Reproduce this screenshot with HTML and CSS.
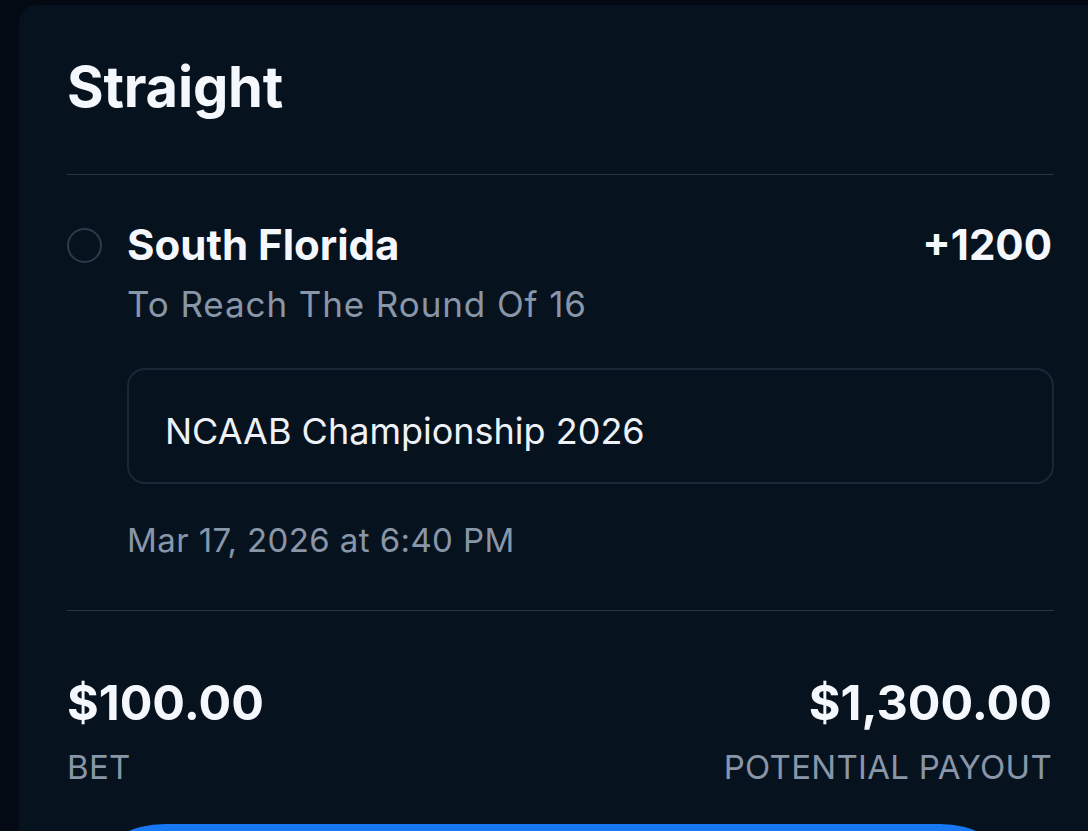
FILE: index.html
```html
<!DOCTYPE html>
<html lang="en">
<head>
  <meta charset="UTF-8">
  <meta name="viewport" content="width=device-width, initial-scale=1.0">
  <title>Bet Slip - Straight</title>
  <link rel="stylesheet" href="styles.css">
</head>
<body>
  <div class="card">
    <h1 class="title">Straight</h1>

    <div class="divider"></div>

    <div class="selection">
      <span class="radio"></span>
      <div class="selection-body">
        <div class="selection-head">
          <span class="team">South Florida</span>
          <span class="odds">+1200</span>
        </div>
        <div class="market">To Reach The Round Of 16</div>
        <div class="event">NCAAB Championship 2026</div>
        <div class="date">Mar 17, 2026 at 6:40 PM</div>
      </div>
    </div>

    <div class="divider"></div>

    <div class="totals">
      <div class="total">
        <div class="amount">$100.00</div>
        <div class="label">BET</div>
      </div>
      <div class="total right">
        <div class="amount">$1,300.00</div>
        <div class="label">POTENTIAL PAYOUT</div>
      </div>
    </div>

    <!-- button label sits below the fold -->
    <button class="place-btn" aria-label="Place Bet"></button>
  </div>
</body>
</html>
```

FILE: styles.css
```css
body {
  margin: 0;
  background-color: #030a14;
  font-family: Inter, "Noto Sans", sans-serif;
  color: #f4f7fb;
  height: 831px;
  overflow: hidden;
}
.card {
  margin: 5px -40px 0 19px;
  background-color: #07121f;
  border-radius: 18px;
  padding: 50px 74px 0 48px;
  min-height: 900px;
}
.title {
  margin: 0 0 55px;
  font-size: 56px;
  font-weight: 700;
  line-height: 64px;
  letter-spacing: -0.2px;
}
.divider {
  height: 1px;
  background-color: #2a3544;
}
.selection {
  display: flex;
  gap: 25px;
  padding-top: 37px;
  padding-bottom: 48px;
}
.radio {
  width: 35px;
  height: 35px;
  border: 2px solid #2f3a48;
  border-radius: 50%;
  box-sizing: border-box;
  margin-top: 16px;
  flex-shrink: 0;
}
.selection-body {
  flex: 1;
}
.selection-head {
  display: flex;
  justify-content: space-between;
  align-items: baseline;
  margin-right: 2px;
}
.team,
.odds {
  font-size: 42px;
  font-weight: 700;
  line-height: 66px;
}
.market {
  font-size: 35px;
  letter-spacing: 0.9px;
  color: #8896a8;
  line-height: 44px;
  margin-top: 4px;
}
.event {
  margin-top: 42px;
  border: 2px solid #1c2735;
  border-radius: 18px;
  padding: 10px 36px 0;
  height: 116px;
  box-sizing: border-box;
  display: flex;
  align-items: center;
  font-size: 36px;
  color: #eef2f7;
}
.date {
  margin-top: 34px;
  font-size: 33px;
  letter-spacing: 0.4px;
  color: #8896a8;
  line-height: 44px;
}
.totals {
  display: flex;
  justify-content: space-between;
  padding-top: 62px;
  margin-right: 2px;
}
.total.right {
  text-align: right;
}
.amount {
  font-size: 48.5px;
  font-weight: 700;
  line-height: 60px;
}
.label {
  font-size: 33px;
  letter-spacing: 0.3px;
  color: #8896a8;
  line-height: 44px;
  margin-top: 12px;
}
.place-btn {
  display: block;
  margin: 35px 50px 0 34px;
  width: calc(100% - 84px);
  height: 110px;
  border: none;
  border-radius: 64px / 40px;
  background-color: #1877f2;
}
```
